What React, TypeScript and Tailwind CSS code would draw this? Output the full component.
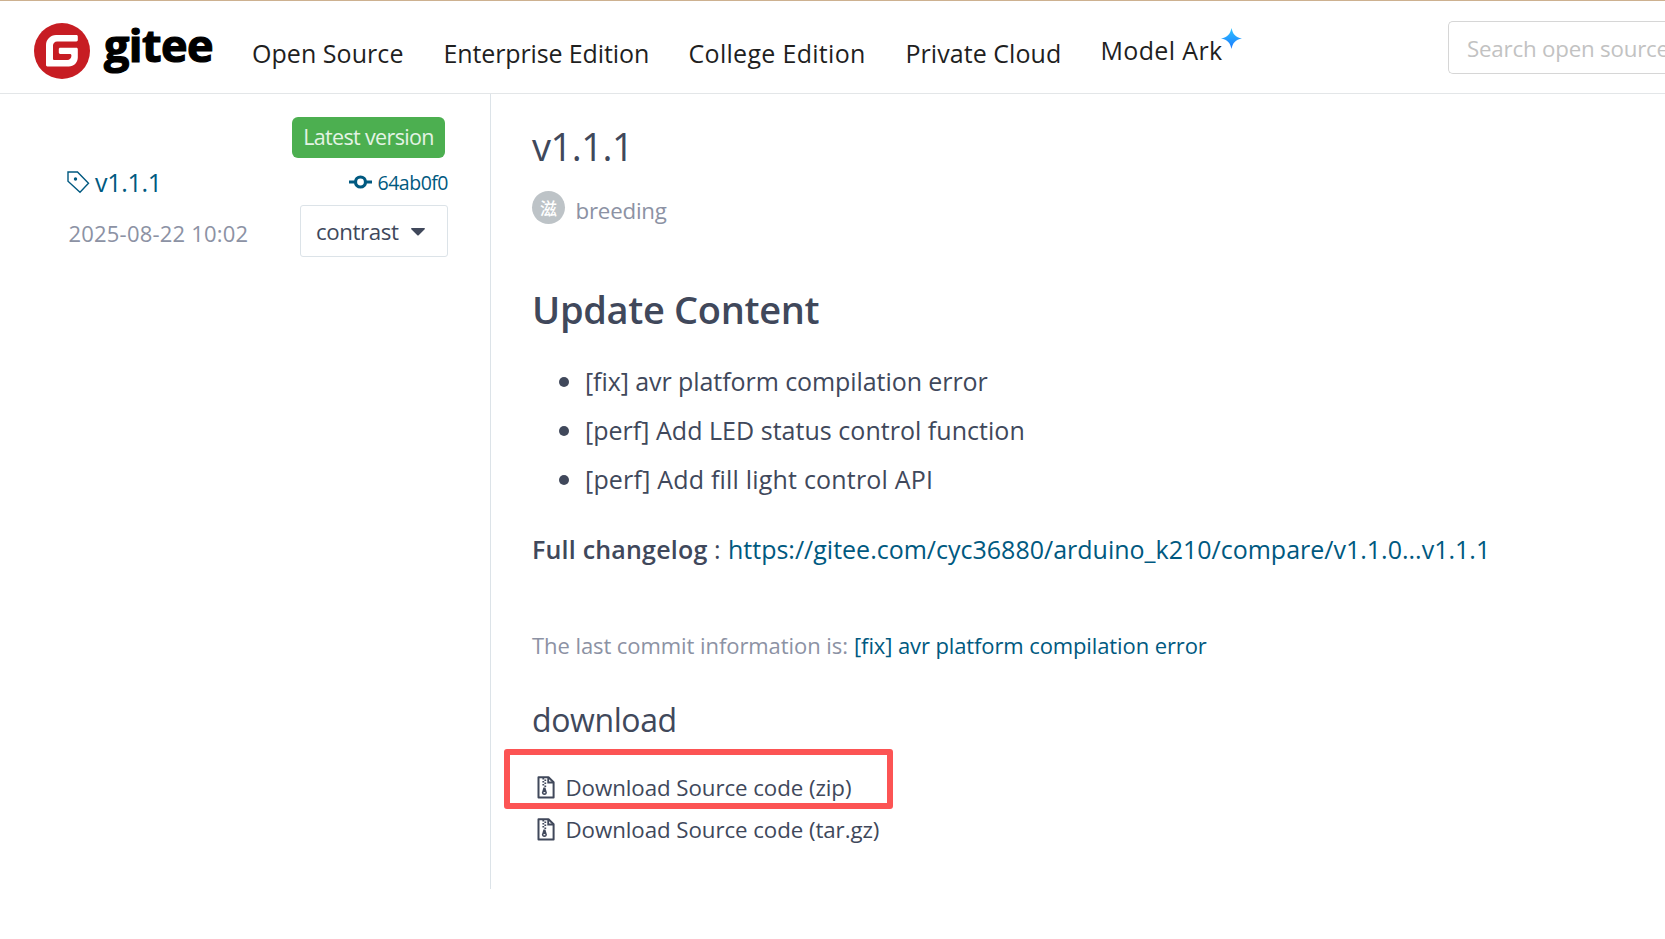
import React from 'react';

const navItems = [
  { label: 'Open Source', cls: 'w-[191.500px] tracking-[0.05px]' },
  { label: 'Enterprise Edition', cls: 'w-[245px] tracking-[-0.12px]' },
  { label: 'College Edition', cls: 'w-[217px] tracking-[0.3px]' },
  { label: 'Private Cloud', cls: 'w-[195px] tracking-[0.05px]' },
];

const changes = [
  { text: '[fix] avr platform compilation error', cls: 'tracking-[-0.07px]' },
  { text: '[perf] Add LED status control function', cls: 'tracking-[0.03px]' },
  { text: '[perf] Add fill light control API', cls: 'tracking-[0.2px]' },
];

const downloads = ['Download Source code (zip)', 'Download Source code (tar.gz)'];

function GiteeMark() {
  return (
    <svg className="size-14 shrink-0" viewBox="0 0 56 56">
      <circle cx="28" cy="28" r="28" fill="#c71d23" />
      <path
        fill="#fff"
        d="M42.4 12H22C16.5 12 12 16.5 12 22v20c0 .8.6 1.4 1.4 1.4h21.4c5 0 9-4 9-9V26.200c0-.8-.6-1.400-1.400-1.400H26.200c-.8 0-1.400.6-1.400 1.400v3.400c0 .8.6 1.400 1.400 1.400h9.800c.8 0 1.400.6 1.400 1.400v.7c0 2.200-1.800 4-4 4H20.400c-.8 0-1.400-.6-1.400-1.400V22.500c0-2.300 1.800-4.100 4.100-4.100h19.300c.8 0 1.400-.6 1.400-1.400v-3.600c0-.8-.6-1.400-1.400-1.400z"
      />
    </svg>
  );
}

function Sparkle() {
  return (
    <svg className="absolute -right-[20px] -top-[7px] h-[21px] w-[21px]" viewBox="0 0 21 21">
      <defs>
        <linearGradient id="spark" x1="0" y1="0" x2="0" y2="1">
          <stop offset="0" stopColor="#2fc4ff" />
          <stop offset="1" stopColor="#1a78ff" />
        </linearGradient>
      </defs>
      <path fill="url(#spark)" d="M10.500 0C11.700 6 14.500 9.300 21 10.500 14.500 11.700 11.700 15 10.500 21 9.300 15 6.500 11.700 0 10.500 6.500 9.300 9.300 6 10.500 0z" />
    </svg>
  );
}

function TagIcon() {
  return (
    <svg className="h-[23px] w-[23px] shrink-0" viewBox="0 0 23 23" fill="none" stroke="#005980" strokeWidth="1.4">
      <path d="M1 1h9.500L21.500 12.200 13 21.200 1 10.200z" />
      <circle cx="8.500" cy="8" r="1.700" fill="#005980" stroke="none" />
    </svg>
  );
}

function CommitIcon() {
  return (
    <svg className="h-[14px] w-[23px] shrink-0" viewBox="0 0 23 14" fill="none" stroke="#005980">
      <path d="M0 7h6M17 7h6" strokeWidth="3" />
      <circle cx="11.500" cy="7" r="5" strokeWidth="3.200" />
    </svg>
  );
}

function ArchiveIcon() {
  return (
    <svg className="h-[23px] w-[18px] shrink-0" viewBox="0 0 18 23" fill="none" stroke="#40485b">
      <path d="M1.500 1.200h10l5.100 5v15.400H1.500z" strokeWidth="2" strokeLinejoin="round" />
      <path d="M11.200 1.500v5h5" strokeWidth="1.800" />
      <path d="M6.300 2v1.500M8.300 3.500V5M6.300 5v1.500M8.300 6.500V8M6.300 8v1.500M8.300 9.500V11" strokeWidth="1.800" />
      <path d="M6.400 11.500h2l1.400 4.700c.3 1.600-.8 2.700-2.400 2.700s-2.700-1.100-2.400-2.700z" fill="#40485b" stroke="none" />
      <path d="M6.500 16.700h1.800" stroke="#fff" strokeWidth="1.200" />
    </svg>
  );
}

export default function App() {
  return (
    <div className="h-[939px] w-full overflow-hidden bg-white font-['Open_Sans','Noto_Sans',sans-serif] text-[#40485b] whitespace-nowrap">
      <header className="flex h-[94px] items-start border-t border-b border-t-[#cdb190] border-b-[#e3e6e8] pl-[34px] text-[#1f1f1f]">
        <a className="flex w-[218px] items-start pt-[22px]">
          <GiteeMark />
          <span className="ml-[14px] -mt-[8px] text-[45px] leading-[60px] font-bold tracking-[-0.6px] text-black [-webkit-text-stroke:1.2px_black]">
            gitee
          </span>
        </a>
        <nav className="flex pt-[37px] text-[25px] leading-[30px]">
          {navItems.map((n) => (
            <a key={n.label} className={n.cls}>{n.label}</a>
          ))}
          <a className="relative -mt-[3px] h-[30px] tracking-[0.35px]">
            Model Ark
            <Sparkle />
          </a>
        </nav>
        <div className="mt-5 ml-auto flex h-[53px] w-[217px] shrink-0 items-center rounded-l-[5px] border border-r-0 border-[#d6d6d6] pl-[18px] text-[22.3px] tracking-[-0.2px] text-[#c2c2c2]">
          <span className="mt-[3px]">Search open source</span>
        </div>
      </header>

      <div className="flex">
        <aside className="h-[795px] w-[491px] shrink-0 border-r border-[#dce3e8] pt-[23px] pl-[67px]">
          <div className="ml-[225px] flex h-[41px] w-[153px] items-center justify-center rounded-[6px] bg-[#4caf50] text-[21.5px] tracking-[-0.65px] text-[#e4f3e5]">
            Latest version
          </div>
          <div className="mt-[9px] flex h-[30px] w-[381px] items-center justify-between text-[#005980]">
            <a className="flex items-center text-[25px] leading-[30px]">
              <TagIcon />
              <span className="ml-[5px] tracking-[-0.3px]">v1.1.1</span>
            </a>
            <a className="flex items-center text-[19.5px] leading-[30px] tracking-[-0.5px]">
              <CommitIcon />
              <span className="mt-[2px] ml-[6px]">64ab0f0</span>
            </a>
          </div>
          <div className="mt-2 flex h-[52px] w-[381px] items-center justify-between">
            <span className="mt-[5px] ml-[1.5px] text-[22px] tracking-[0.2px] text-[#8c92a4]">2025-08-22 10:02</span>
            <button className="flex h-[52px] w-[148px] items-center rounded-[3px] border border-[#dce3e8] pl-[15px] text-[22.3px] tracking-[-0.4px]">
              <span className="mt-[2px]">contrast</span>
              <svg className="mt-[2px] ml-[12px] h-[8px] w-[14px]" viewBox="0 0 14 9" preserveAspectRatio="none">
                <path d="M.8 0h12.400c.7 0 1 .8.5 1.300L7.700 8.200c-.4.4-1 .4-1.400 0L.3 1.300C-.2.800.1 0 .8 0z" fill="#40485b" />
              </svg>
            </button>
          </div>
        </aside>

        <main className="pt-7 pl-[41px]">
          <h1 className="text-[38px] leading-[48px] tracking-[-0.5px]">v1.1.1</h1>
          <div className="mt-[21px] flex h-[33px] items-center">
            <span className="flex size-[33px] items-center justify-center rounded-full bg-[#bdc3c7] font-['Noto_Sans_CJK_SC',sans-serif] text-[17px] leading-none font-medium text-white">
              滋
            </span>
            <span className="mt-[7px] ml-[10.500px] text-[22.3px] tracking-[-0.2px] text-[#8c92a4]">breeding</span>
          </div>

          <h2 className="mt-[60px] text-[38px] leading-[50px] font-semibold tracking-[-0.33px]">Update Content</h2>
          <ul className="mt-[23px] text-[25px] leading-[49px]">
            {changes.map((c) => (
              <li key={c.text} className="flex items-center">
                <span className="mr-[16px] ml-[27px] size-[10px] rounded-full bg-[#40485b]" />
                <span className={c.cls}>{c.text}</span>
              </li>
            ))}
          </ul>
          <p className="mt-[25px] flex text-[25px] leading-10">
            <strong className="w-[182px] font-semibold tracking-[0.2px]">Full changelog</strong>
            <span className="w-[14px]">:</span>
            <a className="tracking-[0px] text-[#005980]">
              https://gitee.com/cyc36880/arduino_k210/compare/v1.1.0...v1.1.1
            </a>
          </p>
          <p className="mt-[61px] flex text-[22px] leading-[30px]">
            <span className="w-[322px] tracking-[-0.07px] text-[#8c92a4]">The last commit information is:</span>
            <a className="tracking-[-0.11px] text-[#005980]">[fix] avr platform compilation error</a>
          </p>

          <h3 className="mt-10 text-[32px] leading-10 tracking-[-0.4px]">download</h3>
          <div className="relative mt-[26px]">
            {downloads.map((d) => (
              <a key={d} className="flex h-[42px] items-center text-[22.3px] tracking-[-0.07px]">
                <span className="ml-[4.500px]">
                  <ArchiveIcon />
                </span>
                <span className="mt-[2px] ml-[11px]">{d}</span>
              </a>
            ))}
            <div className="absolute -top-[17px] -left-[28px] h-[60px] w-[389px] rounded-[3px] border-[6px] border-[#fc5454]" />
          </div>
        </main>
      </div>
    </div>
  );
}
